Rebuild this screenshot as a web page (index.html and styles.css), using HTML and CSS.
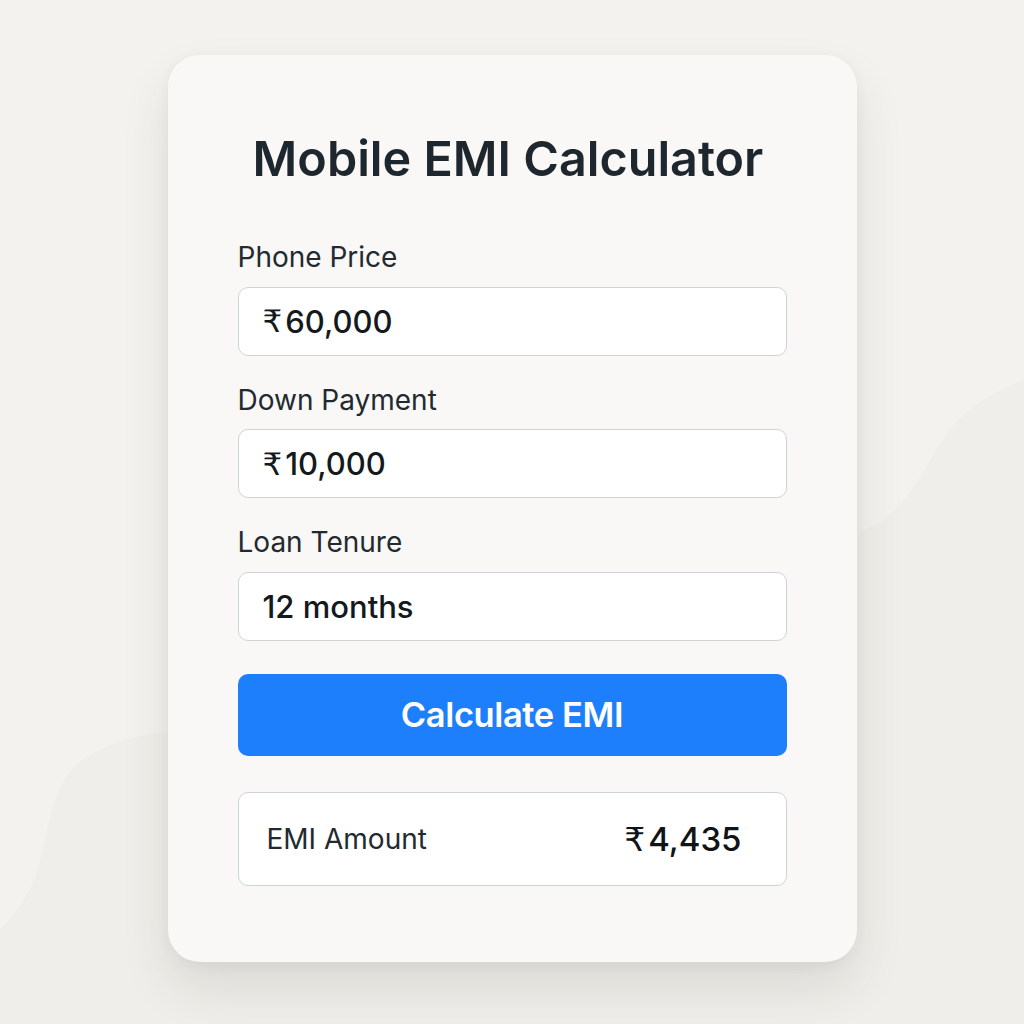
FILE: index.html
```html
<!DOCTYPE html>
<html lang="en">
<head>
<meta charset="utf-8">
<title>Mobile EMI Calculator</title>
<link rel="stylesheet" href="styles.css">
</head>
<body>
<svg class="bg-blobs" width="1024" height="1024" viewBox="0 0 1024 1024" aria-hidden="true">
  <path class="blob" d="M0 930 C 18 910, 28 895, 34 880 C 42 860, 45 835, 52 810 C 60 780, 75 760, 100 750 C 125 738, 145 734, 175 732 L 600 732 L 600 534 L 850 534 C 868 530, 880 524, 895 510 C 915 490, 930 458, 948 432 C 965 410, 990 392, 1024 380 L 1024 1024 L 0 1024 Z"/>
</svg>
<main class="card">
  <h1 class="title">Mobile EMI Calculator</h1>
  <div class="field">
    <label class="label">Phone Price</label>
    <div class="input"><span class="rupee">₹</span>60,000</div>
  </div>
  <div class="field">
    <label class="label">Down Payment</label>
    <div class="input"><span class="rupee">₹</span>10,000</div>
  </div>
  <div class="field">
    <label class="label">Loan Tenure</label>
    <div class="input">12 months</div>
  </div>
  <button class="btn">Calculate EMI</button>
  <div class="result">
    <span class="result-label">EMI Amount</span>
    <span class="result-value"><span class="rupee">₹</span>4,435</span>
  </div>
</main>
</body>
</html>
```
FILE: styles.css
```css
html, body {
  margin: 0;
  padding: 0;
}
body {
  width: 1024px;
  height: 1024px;
  background: #f3f2ef;
  font-family: Inter, "Noto Sans", "DejaVu Sans", sans-serif;
  position: relative;
  overflow: hidden;
}
.bg-blobs {
  position: absolute;
  left: 0;
  top: 0;
}
.blob {
  fill: #efeeea;
}
.card {
  position: relative;
  box-sizing: border-box;
  width: 689px;
  height: 907px;
  margin: 55px auto 0;
  background: #f9f8f7;
  border-radius: 32px;
  box-shadow: 0 26px 50px rgba(60, 55, 50, 0.11), 0 4px 14px rgba(60, 55, 50, 0.05);
  padding: 80px 70px 0;
  display: flex;
  flex-direction: column;
}
.title {
  margin: 0 0 60px;
  padding-right: 8px;
  font-size: 48.5px;
  line-height: 48px;
  font-weight: 600;
  color: #1e272d;
  text-align: center;
  letter-spacing: 0;
}
.field {
  display: flex;
  flex-direction: column;
  gap: 15.5px;
  margin-bottom: 30px;
}
.label {
  font-size: 28px;
  line-height: 28px;
  color: #222a2f;
  font-weight: 400;
}
.input {
  box-sizing: border-box;
  height: 69px;
  background: #ffffff;
  border: 1.5px solid #cfd3d8;
  border-radius: 10px;
  padding: 0 24px;
  display: flex;
  align-items: center;
  font-size: 31px;
  font-weight: 500;
  color: #14191d;
}
.rupee {
  font-family: "DejaVu Sans", sans-serif;
  font-weight: 400;
  margin-right: 3px;
}
.btn {
  box-sizing: border-box;
  height: 82px;
  margin-top: 3px;
  border: none;
  border-radius: 10px;
  background: #1e7ffd;
  color: #ffffff;
  font-family: Inter, "Noto Sans", sans-serif;
  font-size: 34.5px;
  font-weight: 600;
  letter-spacing: -0.4px;
}
.result {
  box-sizing: border-box;
  height: 94px;
  margin-top: 36px;
  background: #ffffff;
  border: 1.5px solid #cfd3d8;
  border-radius: 10px;
  padding: 0 44px 0 28px;
  display: flex;
  align-items: center;
  justify-content: space-between;
}
.result-label {
  font-size: 28px;
  color: #222a2f;
}
.result-value {
  font-size: 33px;
  font-weight: 500;
  color: #111417;
}
```
